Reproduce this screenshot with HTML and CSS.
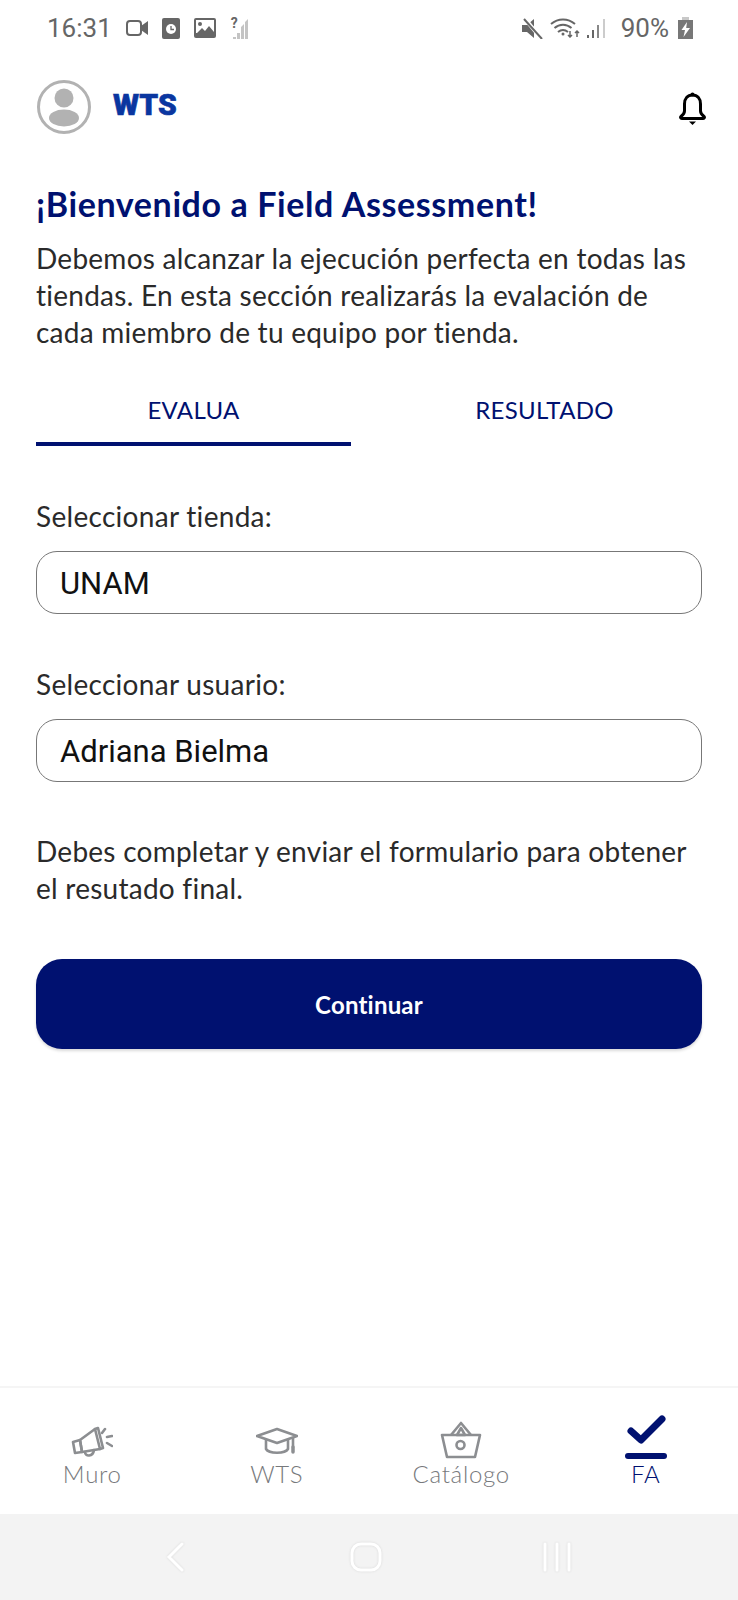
FILE: index.html
```html
<!DOCTYPE html>
<html lang="es">
<head>
<meta charset="utf-8">
<title>Field Assessment</title>
<link rel="stylesheet" href="styles.css">
</head>
<body>
<div class="phone">
  <div class="status">
    <span class="time">16:31</span>
    <svg class="si video" width="22" height="16" viewBox="0 0 22 16"><rect x="1" y="1" width="14" height="14" rx="3" fill="none" stroke="#666" stroke-width="2"/><path d="M15 6l7-5v14l-7-5z" fill="#666"/></svg>
    <svg class="si clock" width="18" height="21" viewBox="0 0 18 21"><rect width="18" height="21" rx="2" fill="#666"/><circle cx="9" cy="11" r="5" fill="#fff"/><path d="M9 8v3.5h3" stroke="#666" stroke-width="1.3" fill="none"/></svg>
    <svg class="si image" width="22" height="20" viewBox="0 0 22 20"><rect width="22" height="20" rx="2" fill="#666"/><rect x="2" y="2" width="18" height="13" fill="#fff"/><circle cx="6" cy="6" r="2" fill="#666"/><path d="M2 16l6-6 3 3 4-5 5 6v3H2z" fill="#666"/></svg>
    <span class="nosim">
      <span class="qmark">?</span>
      <svg class="si" width="18" height="21" viewBox="0 0 18 21"><path d="M2 21v-2h3v2zM6 21v-6h3v6zM10 21V9l3-3v15zM14 21V4l3-3v20z" fill="#c4c4c4"/></svg>
    </span>
    <span class="spacer"></span>
    <svg class="si mute" width="21" height="21" viewBox="0 0 21 21"><path d="M0 7h5l7-6v19l-7-6H0z" fill="#666"/><path d="M3 1l16 19" stroke="#fff" stroke-width="4"/><path d="M2 1l18 20" stroke="#666" stroke-width="2"/></svg>
    <svg class="si wifi" width="30" height="20" viewBox="0 0 30 20"><path d="M1 6c7-6 17-6 24 0M4.500 10c5-4.500 12-4.500 17 0M8 14c3-2.500 7-2.500 10 0" fill="none" stroke="#666" stroke-width="2"/><circle cx="13" cy="16" r="1.500" fill="#666"/><path d="M20 13v6M18 17l2 2 2-2M27 19v-6M25 15l2-2 2 2" fill="none" stroke="#666" stroke-width="1.500"/></svg>
    <svg class="si bars" width="19" height="20" viewBox="0 0 19 20"><path d="M0 17h2v3H0zM5 12h2v8H5z" fill="#666"/><path d="M10 7h2v13h-2z" fill="#888"/><path d="M16 1h2v19h-2z" fill="#ccc"/></svg>
    <span class="pct">90%</span>
    <svg class="si batt" width="15" height="22" viewBox="0 0 15 22"><rect x="4" y="0" width="7" height="4" fill="#c8c8c8"/><rect y="3" width="15" height="19" fill="#777"/><path d="M9 5L3.500 13H7l-1.500 7L12 11H8.200z" fill="#fff"/></svg>
  </div>

  <header class="top">
    <svg class="avatar" width="54" height="54" viewBox="0 0 54 54"><circle cx="27" cy="27" r="25.500" fill="#fff" stroke="#b2b2b2" stroke-width="3"/><circle cx="27" cy="18" r="9.500" fill="#b2b2b2"/><ellipse cx="27" cy="38" rx="15" ry="8.500" fill="#b2b2b2"/></svg>
    <span class="logo">WTS</span>
    <svg class="bell" width="27" height="33" viewBox="0 0 27 33"><path d="M13.500 3c-5 0-8 3.500-8 9v7c0 2-1 3.500-3.500 5.500-.8.700-.4 2 .8 2h21.400c1.200 0 1.600-1.300.8-2-2.500-2-3.500-3.500-3.500-5.500v-7c0-5.500-3-9-8-9z" fill="none" stroke="#000" stroke-width="3" stroke-linejoin="round"/><path d="M10 29.500h7l-3.500 3.500z" fill="#000"/><circle cx="13.500" cy="2.500" r="2" fill="#000"/></svg>
  </header>

  <main class="content">
    <h1 class="title">¡Bienvenido a Field Assessment!</h1>
    <p class="text intro">Debemos alcanzar la ejecución perfecta en todas las tiendas. En esta sección realizarás la evalación de cada miembro de tu equipo por tienda.</p>

    <div class="tabs">
      <div class="tab active">EVALUA</div>
      <div class="tab">RESULTADO</div>
    </div>

    <label class="label first">Seleccionar tienda:</label>
    <div class="field">UNAM</div>
    <label class="label second">Seleccionar usuario:</label>
    <div class="field">Adriana Bielma</div>

    <p class="text note">Debes completar y enviar el formulario para obtener el resutado final.</p>
    <button class="cta">Continuar</button>
  </main>

  <nav class="nav">
    <div class="item">
      <svg class="nicon" width="42" height="34" viewBox="0 0 42 34" fill="none" stroke="#8c8e91" stroke-width="2.600" stroke-linejoin="round" stroke-linecap="round"><path d="M2 17l7-2 2 12-7 1z"/><path d="M9 15L24 4l5 20-18 3z"/><path d="M24 4l3-1 5 20-3 1"/><path d="M14 27c0 5 8 5 9-2"/><path d="M34 4l-3 4M41 11l-5 1M41 21l-5-3"/></svg>
      <span class="nlabel">Muro</span>
    </div>
    <div class="item">
      <svg class="nicon" width="42" height="34" viewBox="0 0 42 34" fill="none" stroke="#8c8e91" stroke-width="2.600" stroke-linejoin="round" stroke-linecap="round"><path d="M1 11L21 4l20 7-20 7z"/><path d="M10 15v9c3 5 19 5 22 0v-9"/><path d="M37 13v9"/><path d="M37 22v5" stroke-width="3.500"/></svg>
      <span class="nlabel">WTS</span>
    </div>
    <div class="item">
      <svg class="nicon" width="42" height="38" viewBox="0 0 42 38" fill="none" stroke="#8c8e91" stroke-width="2.600" stroke-linejoin="round"><path d="M2 14h38l-5 22H7z"/><path d="M11 14L21 2l10 12"/><path d="M21 7l-4 7h8z"/><circle cx="20.500" cy="24" r="4"/></svg>
      <span class="nlabel">Catálogo</span>
    </div>
    <div class="item on">
      <svg class="nicon" width="42" height="45" viewBox="0 0 42 45"><path d="M6 17l10 9L37 5" fill="none" stroke="#001170" stroke-width="7" stroke-linecap="round" stroke-linejoin="round"/><rect x="0" y="39" width="42" height="6" rx="3" fill="#001170"/></svg>
      <span class="nlabel">FA</span>
    </div>
  </nav>

  <div class="sysbar">
    <svg width="18" height="30" viewBox="0 0 18 30"><path d="M16 2L3 15l13 13" fill="none" stroke="#fff" stroke-width="3" stroke-linecap="round"/></svg>
    <svg width="32" height="30" viewBox="0 0 32 30"><rect x="2" y="2" width="28" height="26" rx="9" fill="none" stroke="#fff" stroke-width="3"/></svg>
    <svg width="30" height="30" viewBox="0 0 30 30"><path d="M3 2v26M15 2v26M27 2v26" stroke="#fff" stroke-width="3" stroke-linecap="round"/></svg>
  </div>
</div>
</body>
</html>
```
FILE: styles.css
```css
* { box-sizing: border-box; }
html, body { margin: 0; padding: 0; background: #fff; }
.phone {
  width: 738px;
  height: 1600px;
  display: flex;
  flex-direction: column;
  font-family: "Lato", "Liberation Sans", sans-serif;
  font-variant-ligatures: none;
  color: #2a2a2a;
  overflow: hidden;
}
.status {
  height: 56px;
  display: flex;
  align-items: center;
  padding: 0 45px 0 47px;
}
.time, .pct {
  font-family: "Roboto", sans-serif;
  font-size: 26px;
  color: #666;
  line-height: 1;
}
.si { flex: none; display: block; }
.video { margin-left: 14px; }
.clock { margin-left: 14px; }
.image { margin-left: 14px; }
.nosim {
  position: relative;
  margin-left: 15px;
  flex: none;
}
.qmark {
  position: absolute;
  left: 0;
  top: -3px;
  font: bold 14px/17px "Roboto", sans-serif;
  color: #666;
}
.spacer { flex: 1; }
.wifi { margin-left: 7px; }
.bars { margin-left: 7px; }
.pct { margin-left: 15px; }
.batt { margin-left: 9px; }
.top {
  display: flex;
  align-items: center;
  height: 54px;
  margin-top: 24px;
  padding: 0 32px 0 37px;
}
.logo {
  margin: -5px 0 0 22px;
  font-family: "Roboto", sans-serif;
  font-size: 30px;
  font-weight: 900;
  color: #0a36a0;
  -webkit-text-stroke: 0.6px #0a36a0;
}
.bell { margin-left: auto; margin-top: 3px; }
.content {
  padding: 0 36px;
  flex: 1;
}
.title {
  margin: 50px 0 0;
  font-size: 34px;
  line-height: 40px;
  font-weight: 700;
  color: #001170;
  letter-spacing: 0.6px;
  white-space: nowrap;
}
.text {
  margin: 0;
  font-size: 28px;
  line-height: 37px;
  letter-spacing: 0.25px;
}
.intro { margin-top: 16px; }
.tabs {
  display: grid;
  grid-template-columns: 315px 1fr;
  margin: 33px -36px 0 0;
}
.tab {
  height: 62px;
  padding-top: 11px;
  text-align: center;
  font-size: 24px;
  line-height: 30px;
  letter-spacing: 0.3px;
  color: #001170;
}
.active { border-bottom: 4px solid #001170; }
.label {
  display: block;
  font-size: 28px;
  line-height: 36px;
  letter-spacing: 0.3px;
}
.first { margin-top: 52px; }
.second { margin-top: 52px; }
.field {
  height: 63px;
  margin-top: 17px;
  padding: 2px 23px 0;
  display: flex;
  align-items: center;
  border: 1px solid #777;
  border-radius: 21px;
  font-family: "Roboto", sans-serif;
  font-size: 31px;
  color: #111;
}
.note { margin-top: 51px; }
.cta {
  display: block;
  width: 100%;
  height: 90px;
  margin-top: 52px;
  border: 0;
  border-radius: 26px;
  background: #001170;
  color: #fff;
  font-family: inherit;
  font-size: 24px;
  font-weight: 700;
  letter-spacing: 0.2px;
  box-shadow: 0 2px 3px rgba(0,0,0,.15);
}
.nav {
  flex: none;
  height: 128px;
  display: grid;
  grid-template-columns: repeat(4, 1fr);
  border-top: 2px solid #f5f5f5;
}
.item {
  display: flex;
  flex-direction: column;
  align-items: center;
  justify-content: flex-end;
  padding-bottom: 25px;
}
.nicon { display: block; }
.nlabel {
  font-size: 24px;
  font-weight: 300;
  line-height: 30px;
  letter-spacing: 0.7px;
  color: #77797c;
}
.on .nlabel { color: #001170; }
.sysbar {
  flex: none;
  height: 86px;
  background: #f3f3f3;
  display: grid;
  grid-template-columns: repeat(3, 1fr);
  justify-items: center;
  align-items: center;
  padding: 0 86px 0 80px;
}
.sysbar svg { filter: drop-shadow(0 0 1px #d8d8d8); }
```
